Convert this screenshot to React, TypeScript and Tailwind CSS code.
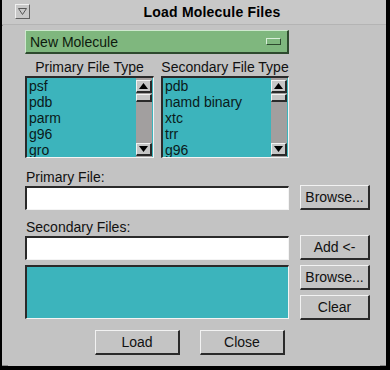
import React from "react";

const raised = "border-t border-l border-[#f2f2f2] border-b-2 border-r-2 border-b-[#2a2a2a] border-r-[#2a2a2a]";
const sunken = "border-t-2 border-l-2 border-t-[#2a2a2a] border-l-[#2a2a2a] border-b border-r border-b-[#f4f4f4] border-r-[#f4f4f4]";

function Btn({ label, w = "w-[70px]" }: { label: string; w?: string }) {
  return (
    <div className={`${w} h-[25px] bg-[#c4c4c4] ${raised} flex items-center justify-center text-[14px] leading-[16px] text-[#111]`}>
      {label}
    </div>
  );
}

function ScrollBar() {
  return (
    <div className="w-[16px] h-full bg-[#a29f9f] flex flex-col pt-[2px] pb-[1px]">
      <div className={`h-[13px] bg-[#c6c6c6] ${raised} flex items-center justify-center`}>
        <svg width="9" height="6" viewBox="0 0 9 6"><polygon points="4.5,0 9,6 0,6" fill="#000" /></svg>
      </div>
      <div className={`h-[8px] mt-[1px] bg-[#c6c6c6] ${raised}`} />
      <div className="flex-1" />
      <div className={`h-[13px] bg-[#c6c6c6] ${raised} flex items-center justify-center`}>
        <svg width="9" height="6" viewBox="0 0 9 6"><polygon points="0,0 9,0 4.5,6" fill="#000" /></svg>
      </div>
    </div>
  );
}

function ListBox({ items, w }: { items: string[]; w: string }) {
  return (
    <div className={`${w} h-[82px] bg-[#3cb4bc] ${sunken} flex`}>
      <div className="flex-1 pl-[2px] overflow-hidden">
        {items.map((it) => (
          <div key={it} className="h-[16px] leading-[16px] text-[14px] text-[#0a1a1a] whitespace-nowrap">{it}</div>
        ))}
      </div>
      <div className="pr-[1px]"><ScrollBar /></div>
    </div>
  );
}

export default function App() {
  return (
    <div className="w-[390px] h-[370px] bg-black" style={{ fontFamily: '"Liberation Sans", Arial, sans-serif' }}>
      <div className="w-[384px] h-[366px] ml-[2px] bg-[#c3c3c3] flex flex-col relative">
        {/* corner marks */}
        <div className="absolute left-0 top-[6px] w-[1px] h-[20px] bg-[#8a8a8a]" />
        <div className="absolute left-0 top-[6px] w-[6px] h-[1px] bg-[#8a8a8a]" />
        <div className="absolute right-0 top-[6px] w-[6px] h-[1px] bg-[#8a8a8a]" />
        {/* title bar */}
        <div className="h-[25px] bg-[#c8c8c8] border-b border-[#b4b4b4] flex items-center relative">
          <div className={`absolute left-[13px] top-[4px] w-[15px] h-[15px] bg-[#c8c8c8] border border-t-[#f0f0f0] border-l-[#f0f0f0] border-b-[#606060] border-r-[#606060] flex items-center justify-center`}>
            <svg width="9" height="7" viewBox="0 0 9 7"><polygon points="0.5,0.5 8.5,0.5 4.5,6.5" fill="none" stroke="#555" strokeWidth="1" /></svg>
          </div>
          <div className="w-full text-center pl-[36px] text-[14px] font-bold leading-[16px] text-black tracking-[0.2px]">Load Molecule Files</div>
        </div>
        {/* body */}
        <div className="pl-[23px] flex flex-col">
          <div className={`mt-[5px] w-[264px] h-[24px] bg-[#7fb77e] border-t border-l border-[#cfe8cf] border-b-2 border-r-2 border-b-[#2e4a2e] border-r-[#2e4a2e] flex items-center justify-between pl-[4px] pr-[6px]`}>
            <span className="text-[14px] leading-[16px] text-[#0d1a0d]">New Molecule</span>
            <div className="w-[15px] h-[7px] bg-[#7fb77e] border border-t-[#d8efd8] border-l-[#d8efd8] border-b-[#2e4a2e] border-r-[#2e4a2e]" />
          </div>
          <div className="flex gap-[7px] mt-[5px]">
            <div className="w-[129px] text-center text-[14px] leading-[16px] text-[#111]">Primary File Type</div>
            <div className="w-[128px] text-center text-[14px] leading-[16px] text-[#111] whitespace-nowrap">Secondary File Type</div>
          </div>
          <div className="flex gap-[7px] mt-[1px]">
            <ListBox w="w-[129px]" items={["psf", "pdb", "parm", "g96", "gro"]} />
            <ListBox w="w-[128px]" items={["pdb", "namd binary", "xtc", "trr", "g96"]} />
          </div>
          <div className="mt-[11px] h-[16px] text-[14px] leading-[16px] text-[#111] pl-[1px]">Primary File:</div>
          <div className="flex items-center gap-[11px] h-[25px]">
            <div className={`w-[264px] h-[24px] bg-white ${sunken}`} />
            <Btn label="Browse..." />
          </div>
          <div className="mt-[9px] h-[16px] text-[14px] leading-[16px] text-[#111] pl-[1px]">Secondary Files:</div>
          <div className="flex items-center gap-[11px] h-[25px]">
            <div className={`w-[264px] h-[24px] bg-white ${sunken}`} />
            <Btn label="Add <-" />
          </div>
          <div className="flex gap-[11px] mt-[5px]">
            <div className={`w-[264px] h-[54px] bg-[#3cb4bc] ${sunken}`} />
            <div className="flex flex-col gap-[5px]">
              <Btn label="Browse..." />
              <Btn label="Clear" />
            </div>
          </div>
          <div className="flex gap-[20px] mt-[10px] pl-[70px]">
            <Btn label="Load" w="w-[85px]" />
            <Btn label="Close" w="w-[85px]" />
          </div>
        </div>
        <div className="absolute left-0 bottom-0 w-[6px] h-[1px] bg-[#8a8a8a]" />
        <div className="absolute right-0 bottom-0 w-[6px] h-[1px] bg-[#8a8a8a]" />
      </div>
    </div>
  );
}
